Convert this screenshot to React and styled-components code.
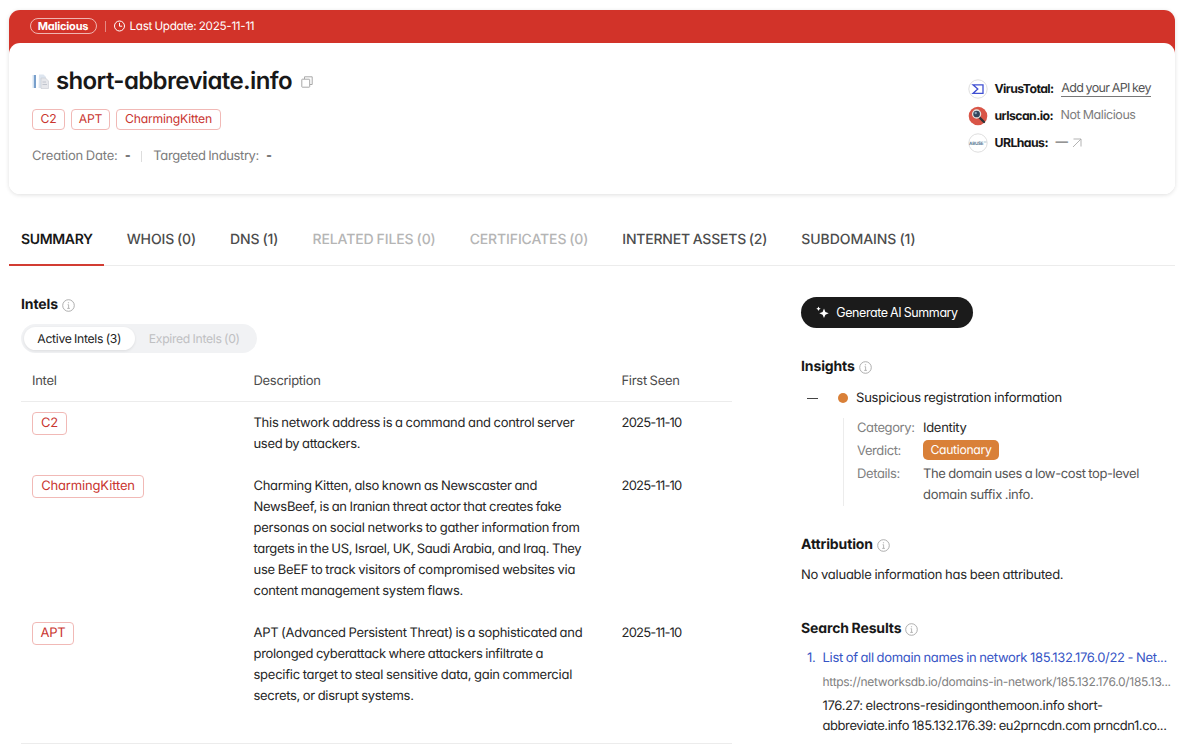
import React from 'react'
import styled, { createGlobalStyle, css } from 'styled-components'

const GlobalStyle = createGlobalStyle`
  * {
    box-sizing: border-box;
  }
  body {
    margin: 0;
    background: #fff;
    color: #1c1c1c;
    font-family: Inter, 'Liberation Sans', sans-serif;
    font-feature-settings: 'cv11';
    font-size: 13px;
    line-height: 21px;
    letter-spacing: -0.3px;
    word-spacing: -0.6px;
    text-rendering: geometricPrecision;
    overflow: hidden;
  }
  svg {
    flex-shrink: 0;
  }
`

const Page = styled.div`
  width: 1200px;
  height: 749px;
  padding: 10px 25.5px 0 9px;
  overflow: hidden;
`

const Banner = styled.header`
  height: 184px;
  background: linear-gradient(#d23329 0 60px, #fff 60px);
  border-radius: 11px;
  box-shadow: 0 1px 4px rgba(0, 0, 0, 0.13);
`

const BannerTop = styled.div`
  display: flex;
  align-items: center;
  height: 33px;
  padding: 0 0 1px 20.5px;
  color: #fff;
  font-size: 11.7px;
  svg {
    margin: 0 4px 1px 0;
  }
`

const Verdict = styled.span`
  display: flex;
  align-items: center;
  justify-content: center;
  width: 67px;
  height: 16px;
  border: 1px solid #f0b5b1;
  border-radius: 8px;
  font-size: 11px;
  font-weight: 700;
  letter-spacing: -0.2px;
`

const Divider = styled.i`
  width: 1px;
  height: 11px;
  margin: 0 ${props => props.$gap}px;
  background: ${props => props.$color};
`

const Card = styled.div`
  display: flex;
  justify-content: space-between;
  height: 151px;
  padding: 23px 22px 0 23px;
  background: #fff;
  border-radius: 11px;
`

const Title = styled.h1`
  display: flex;
  align-items: center;
  height: 29px;
  margin: 0;
  font-size: 24px;
  font-weight: 600;
  letter-spacing: -0.63px;
  color: #181818;
  & > :first-child {
    margin: 1px 7px 0 0;
  }
  & > :last-child {
    margin: 2px 0 0 9px;
  }
`

const Tags = styled.div`
  display: flex;
  gap: 6px;
  margin-top: 14px;
`

const Tag = styled.span`
  display: inline-flex;
  align-items: center;
  justify-content: center;
  width: ${props => props.$width}px;
  height: ${props => (props.$large ? 23 : 21)}px;
  padding-bottom: ${props => (props.$large ? 1 : 2)}px;
  border: 1px solid #f1b9b6;
  border-radius: 4px;
  color: #c9352f;
  font-size: ${props => (props.$large ? 13 : 12.2)}px;
  letter-spacing: ${props => (props.$large ? -0.15 : -0.2)}px;
  vertical-align: top;
`

const Meta = styled.div`
  display: flex;
  align-items: center;
  margin-top: 16px;
  color: #7c7c7c;
  b {
    margin-left: 7px;
    color: #333;
    font-weight: 500;
  }
`

const Sources = styled.div`
  width: 185px;
  padding-top: 9px;
`

const Source = styled.div`
  display: flex;
  align-items: center;
  height: 27px;
  font-size: 12.5px;
  color: #7c7c7c;
  white-space: nowrap;
  & > svg:first-child {
    margin-right: 7px;
  }
  & > svg:last-child {
    margin-left: 4px;
  }
  b {
    margin-right: 7.5px;
    color: #181818;
    font-size: 12.3px;
    font-weight: 700;
    letter-spacing: -0.58px;
  }
  a {
    color: #555;
    line-height: 15px;
    letter-spacing: -0.62px;
    border-bottom: 1px solid #777;
  }
`

const Tabs = styled.nav`
  display: flex;
  gap: 10.5px;
  height: 57px;
  margin-top: 15px;
  border-bottom: 1px solid #ececec;
`

const Tab = styled.div`
  height: 57px;
  padding: 20px 11.5px 0 12px;
  font-size: 14px;
  font-weight: 500;
  letter-spacing: ${props => props.$ls || -0.1}px;
  white-space: nowrap;
  color: ${props => (props.$disabled ? '#b5b5b5' : '#4c4c4c')};
  ${props =>
    props.$active &&
    css`
      color: #181818;
      font-weight: 600;
      border-bottom: 2px solid #d23c32;
    `}
`

const Columns = styled.div`
  display: grid;
  grid-template-columns: 711px 373px;
  column-gap: 69px;
  padding: 28px 0 0 12px;
`

const Heading = styled.h2`
  display: flex;
  align-items: center;
  gap: 4px;
  height: 21px;
  margin: 0;
  font-size: 14px;
  font-weight: 700;
  letter-spacing: -0.12px;
  color: #181818;
  svg {
    color: #a5a5a5;
    margin-top: 2px;
  }
`

const Toggle = styled.div`
  display: flex;
  width: 236px;
  height: 29px;
  margin-top: 9px;
  padding: 3px;
  border-radius: 15px;
  background: #f1f2f4;
`

const ToggleItem = styled.span`
  display: flex;
  align-items: center;
  justify-content: center;
  width: ${props => (props.$active ? 111 : 120)}px;
  padding-bottom: 1px;
  border-radius: 12px;
  font-size: 12.2px;
  color: ${props => (props.$active ? '#222' : '#bfc0c2')};
  background: ${props => (props.$active ? '#fff' : 'transparent')};
  box-shadow: ${props => (props.$active ? '0 1px 3px rgba(0, 0, 0, 0.09)' : 'none')};
`

const Row = styled.div`
  display: grid;
  grid-template-columns: 221.5px 368px 1fr;
  padding: 11px 0 10px 11px;
  color: #262626;
  line-height: 21px;
  white-space: pre;
  ${Tag} {
    margin-top: -1px;
  }
`

const HeadRow = styled(Row)`
  height: 49px;
  padding-top: 18px;
  border-bottom: 1px solid #ececec;
  color: #4c4c4c;
`

const SeenDate = styled.span`
  letter-spacing: -0.8px;
`

// One fixed line of wrapped copy, with its own tracking
const Line = styled.div`
  letter-spacing: ${props => props.$ls || -0.3}px;
  white-space: pre;
`

const TableEnd = styled.div`
  margin-top: 26px;
  border-top: 1px solid #ececec;
`

const Side = styled.aside`
  padding-top: 3px;
`

const Generate = styled.button`
  display: flex;
  align-items: center;
  justify-content: center;
  gap: 7px;
  width: 172px;
  height: 31px;
  margin-bottom: 28px;
  padding: 0 0 1px;
  border: 0;
  border-radius: 16px;
  background: #1b1b1b;
  color: #fff;
  font: inherit;
  font-size: 12.5px;
  letter-spacing: -0.42px;
  word-spacing: inherit;
`

const Insight = styled.div`
  display: flex;
  align-items: center;
  height: 21px;
  margin-top: 11px;
  padding-left: 6px;
  letter-spacing: -0.21px;
`

const Minus = styled.i`
  width: 11px;
  height: 1px;
  margin-right: 20px;
  background: #444;
`

const Dot = styled.i`
  width: 10px;
  height: 10px;
  margin: 0 8px 2px 0;
  border-radius: 50%;
  background: #d98038;
`

const Facts = styled.dl`
  display: grid;
  grid-template-columns: 66px 1fr;
  grid-template-rows: 23px 23px 42px;
  margin: 9px 0 28px 42px;
  padding-left: 13px;
  border-left: 1px solid #ececec;
  color: #555;
  dt {
    color: #808080;
    letter-spacing: -0.4px;
  }
  dd {
    margin: 0;
  }
  dd:nth-of-type(1) {
    color: #262626;
  }
`

const Caution = styled.span`
  display: flex;
  align-items: center;
  justify-content: center;
  width: 76px;
  height: 20px;
  margin-top: -1px;
  padding-bottom: 2px;
  border-radius: 5px;
  background: #d98038;
  color: #fff;
  font-size: 12.2px;
`

const Note = styled.p`
  margin: 10px 0 32px;
  color: #262626;
  letter-spacing: -0.23px;
`

const Result = styled.div`
  display: grid;
  grid-template-columns: 15.5px 1fr;
  padding: 9px 0 0 6px;
  color: #262626;
  white-space: pre;
  .title {
    color: #3654c5;
  }
  .url {
    margin: 3px 0 4px;
    color: #808080;
    font-size: 12px;
    line-height: 20px;
  }
  .text {
    line-height: 20px;
  }
`

const InfoIcon = () => (
  <svg width="13" height="13" viewBox="0 0 13 13" fill="none" stroke="currentColor">
    <circle cx="6.5" cy="6.5" r="5.8" strokeWidth="0.9" />
    <path d="M5.6 5.7h1v3.6M5.2 9.4h2.7" strokeWidth="0.8" />
    <circle cx="6.5" cy="3.8" r="0.35" fill="currentColor" strokeWidth="0.4" />
  </svg>
)

const ClockIcon = () => (
  <svg width="12" height="12" viewBox="0 0 12 12" fill="none" stroke="#fff" strokeWidth="1">
    <circle cx="5.500" cy="6" r="5" />
    <path d="M5.500 2.800v3.400h2.700" />
  </svg>
)

const SiteIcon = () => (
  <svg width="17" height="17" viewBox="0 0 17 17">
    <path d="M0.5 2H4v13H0.5z" fill="#d5e3f2" />
    <path d="M2 2h2v13H2z" fill="#79a0cc" />
    <path d="M7 1.500h4.500L14 4v11H6.500z" fill="#dde5ef" />
    <path d="M9 5h4.500l3 3v7.500H9z" fill="#e6e7eb" stroke="#c6cad2" strokeWidth="0.6" />
    <path d="M10.500 9H14M10.500 11.500H15" stroke="#b8bdc7" strokeWidth="0.8" />
  </svg>
)

const CopyIcon = () => (
  <svg width="12" height="12" viewBox="0 0 12 12" fill="none" stroke="#a8a8a8" strokeWidth="1">
    <path d="M3.500 3V.8h7.700v7.700H9" />
    <rect x=".8" y="3.200" width="7.900" height="8" rx=".5" />
  </svg>
)

const SparkIcon = () => (
  <svg width="13" height="13" viewBox="0 0 13 13" fill="#fff">
    <path d="M8 2.600 9.400 5.900 12.700 7.300 9.400 8.700 8 12 6.600 8.700 3.300 7.300 6.600 5.900z" />
    <path d="M2.500.6l.7 1.500 1.500.7-1.500.7-.7 1.500-.7-1.500L.3 2.800l1.500-.7z" />
  </svg>
)

const ArrowIcon = () => (
  <svg width="10" height="10" viewBox="0 0 10 10" fill="none" stroke="#aaa" strokeWidth="0.9">
    <path d="M1 9 9 1M1.500 1H9v7.500" />
  </svg>
)

const VirusTotalLogo = () => (
  <svg width="20" height="20" viewBox="0 0 20 20" fill="none">
    <circle cx="10" cy="10" r="9.200" fill="#fff" stroke="#d5d5d5" strokeWidth="0.8" />
    <path d="M5 5.800h10v8.600H5l4.800-4.300z" stroke="#4050d2" strokeWidth="1.300" />
  </svg>
)

const UrlscanLogo = () => (
  <svg width="20" height="20" viewBox="0 0 20 20">
    <circle cx="10" cy="10" r="9.300" fill="#d95547" />
    <path d="m11 11 5 5" stroke="#2e3338" strokeWidth="2.400" strokeLinecap="round" />
    <circle cx="8.600" cy="8" r="4" fill="#33465c" stroke="#e6e2dd" strokeWidth="1.300" />
    <circle cx="7.700" cy="7" r="1.200" fill="#8aa2b5" />
  </svg>
)

const UrlhausLogo = () => (
  <svg width="20" height="20" viewBox="0 0 20 20">
    <circle cx="10" cy="10" r="9.200" fill="#fff" stroke="#d5d5d5" strokeWidth="0.8" />
    <text
      x="1"
      y="11.600"
      fontSize="4.600"
      fontWeight="700"
      fill="#5d7f98"
      letterSpacing="0"
      textLength="14.500"
    >
      ABUSE
    </text>
    <path d="M16 9h2.500" stroke="#9db4c4" strokeWidth="0.8" />
  </svg>
)

const tabs = [
  { label: 'SUMMARY', active: true, ls: -0.35 },
  { label: 'WHOIS (0)', ls: -0.14 },
  { label: 'DNS (1)' },
  { label: 'RELATED FILES (0)', disabled: true },
  { label: 'CERTIFICATES (0)', disabled: true, ls: -0.12 },
  { label: 'INTERNET ASSETS (2)', ls: -0.22 },
  { label: 'SUBDOMAINS (1)', ls: -0.04 }
]

const intels = [
  {
    name: 'C2',
    width: 35,
    lines: [
      ['This network address is a command and control server', -0.28],
      ['used by attackers.', -0.33]
    ]
  },
  {
    name: 'CharmingKitten',
    width: 112,
    lines: [
      ['Charming Kitten, also known as Newscaster and', -0.28],
      ['NewsBeef, is an Iranian threat actor that creates fake', -0.31],
      ['personas on social networks to gather information from', -0.24],
      ['targets in the US, Israel, UK, Saudi Arabia, and Iraq. They', -0.33],
      ['use BeEF to track visitors of compromised websites via', -0.25],
      ['content management system flaws.', -0.28]
    ]
  },
  {
    name: 'APT',
    width: 42,
    lines: [
      ['APT (Advanced Persistent Threat) is a sophisticated and', -0.3],
      ['prolonged cyberattack where attackers infiltrate a', -0.32],
      ['specific target to steal sensitive data, gain commercial', -0.25],
      ['secrets, or disrupt systems.', -0.29]
    ]
  }
]

const App = () => (
  <Page>
    <GlobalStyle />
    <Banner>
      <BannerTop>
        <Verdict>Malicious</Verdict>
        <Divider $gap={8} $color="#e58a84" />
        <ClockIcon />
        <span>Last Update: 2025-11-11</span>
      </BannerTop>
      <Card>
        <div>
          <Title>
            <SiteIcon />
            <span>short-abbreviate.info</span>
            <CopyIcon />
          </Title>
          <Tags>
            <Tag $width={33}>C2</Tag>
            <Tag $width={39}>APT</Tag>
            <Tag $width={105}>CharmingKitten</Tag>
          </Tags>
          <Meta>
            <Line $ls={-0.2}>Creation Date:</Line>
            <b>-</b>
            <Divider $gap={11} $color="#ddd" />
            <Line $ls={-0.38}>Targeted Industry:</Line>
            <b>-</b>
          </Meta>
        </div>
        <Sources>
          <Source>
            <VirusTotalLogo />
            <b>VirusTotal:</b>
            <a>Add your API key</a>
          </Source>
          <Source>
            <UrlscanLogo />
            <b>urlscan.io:</b>
            <Line $ls={-0.42}>Not Malicious</Line>
          </Source>
          <Source>
            <UrlhausLogo />
            <b>URLhaus:</b>
            <span>—</span>
            <ArrowIcon />
          </Source>
        </Sources>
      </Card>
    </Banner>
    <Tabs>
      {tabs.map(tab => (
        <Tab key={tab.label} $active={tab.active} $disabled={tab.disabled} $ls={tab.ls}>
          {tab.label}
        </Tab>
      ))}
    </Tabs>
    <Columns>
      <section>
        <Heading>
          Intels <InfoIcon />
        </Heading>
        <Toggle>
          <ToggleItem $active>Active Intels (3)</ToggleItem>
          <ToggleItem>Expired Intels (0)</ToggleItem>
        </Toggle>
        <HeadRow>
          <span>Intel</span>
          <span>Description</span>
          <span>First Seen</span>
        </HeadRow>
        {intels.map(intel => (
          <Row key={intel.name}>
            <div>
              <Tag $large $width={intel.width}>
                {intel.name}
              </Tag>
            </div>
            <div>
              {intel.lines.map(([text, ls]) => (
                <Line key={text} $ls={ls}>
                  {text}
                </Line>
              ))}
            </div>
            <SeenDate>2025-11-10</SeenDate>
          </Row>
        ))}
        <TableEnd />
      </section>
      <Side>
        <Generate>
          <SparkIcon />
          Generate AI Summary
        </Generate>
        <Heading>
          Insights <InfoIcon />
        </Heading>
        <Insight>
          <Minus />
          <Dot />
          Suspicious registration information
        </Insight>
        <Facts>
          <dt>Category:</dt>
          <dd>Identity</dd>
          <dt>Verdict:</dt>
          <dd>
            <Caution>Cautionary</Caution>
          </dd>
          <dt>Details:</dt>
          <dd>
            <Line $ls={-0.38}>The domain uses a low-cost top-level</Line>
            <Line>domain suffix .info.</Line>
          </dd>
        </Facts>
        <Heading>
          Attribution <InfoIcon />
        </Heading>
        <Note>No valuable information has been attributed.</Note>
        <Heading>
          Search Results <InfoIcon />
        </Heading>
        <Result>
          <span className="title">1.</span>
          <div>
            <div className="title">List of all domain names in network 185.132.176.0/22 - Net...</div>
            <div className="url">https://networksdb.io/domains-in-network/185.132.176.0/185.13...</div>
            <div className="text">
              <Line>176.27: electrons-residingonthemoon.info short-</Line>
              <Line $ls={-0.42}>abbreviate.info 185.132.176.39: eu2prncdn.com prncdn1.co...</Line>
            </div>
          </div>
        </Result>
      </Side>
    </Columns>
  </Page>
)

export default App
